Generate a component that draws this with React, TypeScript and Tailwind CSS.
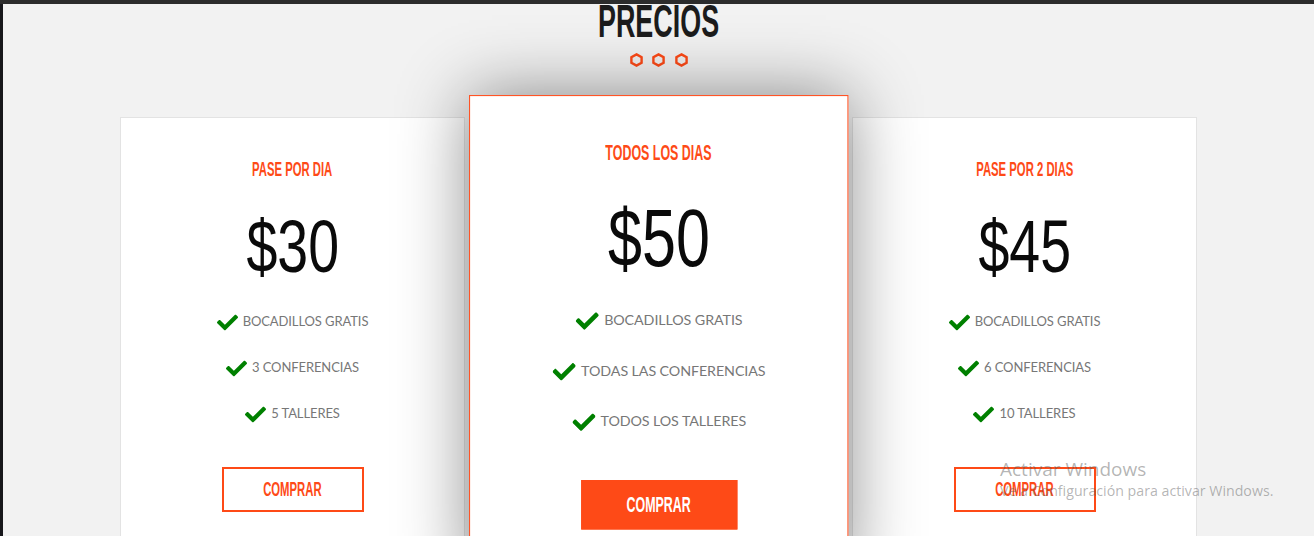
import React from "react";
import { FaCheck } from "react-icons/fa";

type Plan = {
  title: string;
  price: string;
  features: string[];
  featured?: boolean;
};

const plans: Plan[] = [
  { title: "PASE POR DIA", price: "$30", features: ["BOCADILLOS GRATIS", "3 CONFERENCIAS", "5 TALLERES"] },
  {
    title: "TODOS LOS DIAS",
    price: "$50",
    features: ["BOCADILLOS GRATIS", "TODAS LAS CONFERENCIAS", "TODOS LOS TALLERES"],
    featured: true,
  },
  { title: "PASE POR 2 DIAS", price: "$45", features: ["BOCADILLOS GRATIS", "6 CONFERENCIAS", "10 TALLERES"] },
];

function Hex() {
  return (
    <svg width="13" height="14" viewBox="0 0 13 14">
      <polygon
        points="6.5,1.4 11.6,4.2 11.6,9.8 6.5,12.6 1.4,9.8 1.4,4.2"
        fill="none"
        stroke="#fe4a17"
        strokeWidth="2.4"
        strokeLinejoin="miter"
      />
    </svg>
  );
}

function Card({ plan }: { plan: Plan }) {
  return (
    <div
      className={
        plan.featured
          ? "relative z-10 w-[345.4545px] -mr-[0.4545px] h-[440px] shrink-0 bg-white flex flex-col items-center border-[1.4px] border-[#ff5426] scale-110 translate-x-[0.273px] shadow-[0_0_60px_rgba(0,0,0,0.45)]"
          : "relative w-[345px] h-[440px] shrink-0 bg-white flex flex-col items-center border border-[#e3e3e3]"
      }
    >
      <div className="mt-[39px] h-[25px] leading-[25px] text-[19.5px] font-bold text-[#fe4a17] font-['Liberation_Sans',sans-serif] whitespace-nowrap">
        <span className="inline-block scale-x-[0.58]">{plan.title}</span>
      </div>
      <div className="mt-[28px] h-[74px] leading-[74px] text-[74px] text-[#0a0a0a] font-['Liberation_Sans',sans-serif] whitespace-nowrap">
        <span className="inline-block scale-x-[0.75]">{plan.price}</span>
      </div>
      <div className="mt-[15px] flex flex-col">
        {plan.features.map((f) => (
          <div key={f} className="h-[46px] flex items-center justify-center gap-[5px]">
            <FaCheck className="text-[#008000]" size={21} />
            <span className="text-[13px] tracking-[-0.1px] text-[#777777] font-['Lato',sans-serif] whitespace-nowrap">
              {f}
            </span>
          </div>
        ))}
      </div>
      <div
        className={
          plan.featured
            ? "mt-[30px] w-[142px] h-[45px] border-2 border-[#fe4a17] bg-[#fe4a17] text-white flex items-center justify-center text-[19.5px] font-bold font-['Liberation_Sans',sans-serif]"
            : "mt-[30px] w-[142px] h-[45px] border-2 border-[#fe4a17] text-[#fe4a17] flex items-center justify-center text-[19.5px] font-bold font-['Liberation_Sans',sans-serif]"
        }
      >
        <span className="inline-block scale-x-[0.58]">COMPRAR</span>
      </div>
    </div>
  );
}

export default function App() {
  return (
    <div className="relative h-[536px] w-full overflow-hidden bg-[#f2f2f2] flex flex-col">
      <div className="h-[4px] shrink-0 bg-[#2c2c2c]" />
      <div className="flex flex-1 min-h-0">
        <div className="w-[3px] shrink-0 bg-[#17171b]" />
        <div className="flex-1 min-w-0 flex flex-col items-center overflow-hidden">
          <h2 className="-mt-[6px] h-[46px] leading-[46px] text-[46px] font-bold text-[#1c1c1c] font-['Liberation_Sans',sans-serif] whitespace-nowrap">
            <span className="inline-block scale-x-[0.585]">PRECIOS</span>
          </h2>
          <div className="mt-[9px] flex items-center gap-[9.5px]">
            <Hex />
            <Hex />
            <Hex />
          </div>
          <div className="mt-[50px] w-[1077px] flex gap-[21px]">
            {plans.map((p) => (
              <Card key={p.title} plan={p} />
            ))}
          </div>
        </div>
      </div>
      <div className="absolute left-[1000px] top-[457px] pointer-events-none font-['Open_Sans',sans-serif] text-[rgba(90,90,90,0.45)]">
        <div className="text-[19px] leading-[24px]">Activar Windows</div>
        <div className="text-[14.2px] leading-[20px]">Ve a Configuración para activar Windows.</div>
      </div>
    </div>
  );
}
